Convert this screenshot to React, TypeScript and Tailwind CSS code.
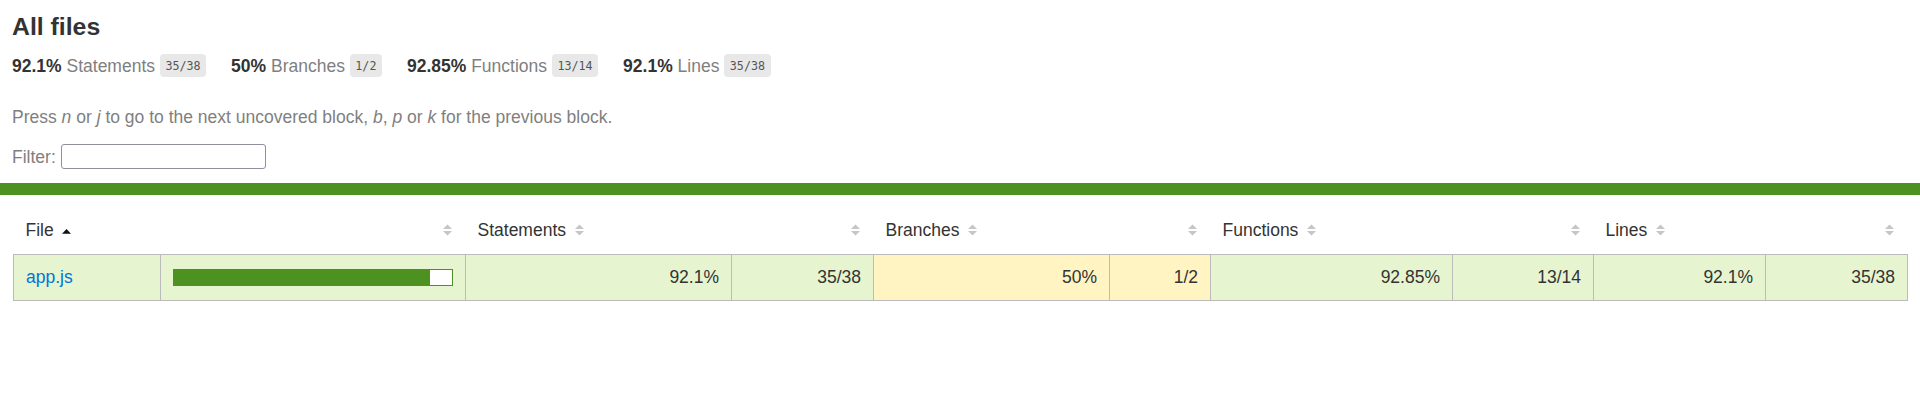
import React from 'react';

type Level = 'high' | 'medium';

interface Metric {
  label: string;
  pct: string;
  fraction: string;
  level: Level;
}

const metrics: Metric[] = [
  { label: 'Statements', pct: '92.1%', fraction: '35/38', level: 'high' },
  { label: 'Branches', pct: '50%', fraction: '1/2', level: 'medium' },
  { label: 'Functions', pct: '92.85%', fraction: '13/14', level: 'high' },
  { label: 'Lines', pct: '92.1%', fraction: '35/38', level: 'high' },
];

const cellBg: Record<Level, string> = {
  high: 'bg-[#e6f5d0]',
  medium: 'bg-[#fff4c2]',
};

// grey up/down arrows used on every sortable column
const Sorter = ({ right = false }: { right?: boolean }) => (
  <svg
    width="9"
    height="12"
    viewBox="0 0 9 12"
    className={`inline-block mb-[3px] ${right ? 'mr-[2px]' : 'ml-[8.5px]'}`}
  >
    <polygon points="0,5 4.5,0.5 9,5" fill="#c6c6c6" />
    <polygon points="0,7 4.5,11.5 9,7" fill="#c6c6c6" />
  </svg>
);

// the column the table is sorted on
const SortedAsc = () => (
  <svg width="9" height="12" viewBox="0 0 9 12" className="inline-block mb-[3px] ml-[8.5px]">
    <polygon points="0,9.7 4.5,5 9,9.7" fill="#111" />
  </svg>
);

const Fraction = ({ value }: { value: string }) => (
  <span className="inline-flex items-center h-[23px] px-[5.5px] rounded-[4px] bg-[#e8e8e8] text-[#555] text-[11.7px] [font-family:'DejaVu_Sans_Mono',monospace]">
    {value}
  </span>
);

export default function App() {
  const fill = 92;

  return (
    <div className="min-h-screen bg-white text-[#333] text-[17.5px] [font-family:'Liberation_Sans',Arial,sans-serif]">
      <div className="px-[12px] pt-[13px]">
        <h1 className="text-[24.8px] leading-[28px] font-bold">All files</h1>

        {/* totals */}
        <div className="mt-[13px] flex items-center h-[23px] leading-[20px]">
          {metrics.map((m) => (
            <div key={m.label} className="flex items-center pr-[25px] whitespace-pre">
              <span className="font-bold">{m.pct} </span>
              <span className="text-[#7f7f7f]">{m.label} </span>
              <Fraction value={m.fraction} />
            </div>
          ))}
        </div>

        <p className="mt-[30px] leading-[20px] text-[#7f7f7f]">
          Press <em>n</em> or <em>j</em> to go to the next uncovered block, <em>b</em>, <em>p</em> or{' '}
          <em>k</em> for the previous block.
        </p>

        <div className="mt-[17px] flex items-center h-[25px] leading-[20px] text-[#7f7f7f] whitespace-pre">
          <span>Filter: </span>
          <input
            type="search"
            className="w-[205px] h-[25px] border border-[#8f8f9d] rounded-[3px] bg-white outline-none"
          />
        </div>
      </div>

      {/* status line */}
      <div className="mt-[14px] h-[12px] bg-[#4d9221]" />

      <div className="pl-[13px] pr-[12px] pt-[12px]">
        <table className="w-full table-fixed border-collapse leading-[20px]">
          <colgroup>
            <col className="w-[147px]" />
            <col className="w-[305px]" />
            <col className="w-[266px]" />
            <col className="w-[142px]" />
            <col className="w-[236px]" />
            <col className="w-[101px]" />
            <col className="w-[242px]" />
            <col className="w-[141px]" />
            <col className="w-[172px]" />
            <col className="w-[142px]" />
          </colgroup>
          <thead>
            <tr>
              <th className="h-[47px] px-[12px] text-left font-normal whitespace-nowrap">
                File
                <SortedAsc />
              </th>
              <th className="px-[12px] text-right font-normal">
                <Sorter right />
              </th>
              {metrics.map((m) => (
                <React.Fragment key={m.label}>
                  <th className="px-[12px] text-left font-normal whitespace-nowrap">
                    {m.label}
                    <Sorter />
                  </th>
                  <th className="px-[12px] text-right font-normal">
                    <Sorter right />
                  </th>
                </React.Fragment>
              ))}
            </tr>
          </thead>
          <tbody className="border border-[#bbb]">
            <tr className="border-b border-[#bbb]">
              <td className="h-[46px] px-[12px] border-r border-[#bbb] bg-[#e6f5d0] whitespace-nowrap">
                <a href="#" className="text-[#0074d9]">
                  app.js
                </a>
              </td>
              <td className="px-[12px] border-r border-[#bbb] bg-[#e6f5d0]">
                <div className="flex h-[17px] border border-[#4d9221]">
                  <div className="h-full bg-[#4d9221]" style={{ width: `${fill}%` }} />
                  <div className="h-full flex-1 bg-white" />
                </div>
              </td>
              {metrics.map((m) => (
                <React.Fragment key={m.label}>
                  <td className={`px-[12px] text-right border-r border-[#bbb] ${cellBg[m.level]}`}>
                    {m.pct}
                  </td>
                  <td className={`px-[12px] text-right border-r border-[#bbb] ${cellBg[m.level]}`}>
                    {m.fraction}
                  </td>
                </React.Fragment>
              ))}
            </tr>
          </tbody>
        </table>
      </div>
    </div>
  );
}
